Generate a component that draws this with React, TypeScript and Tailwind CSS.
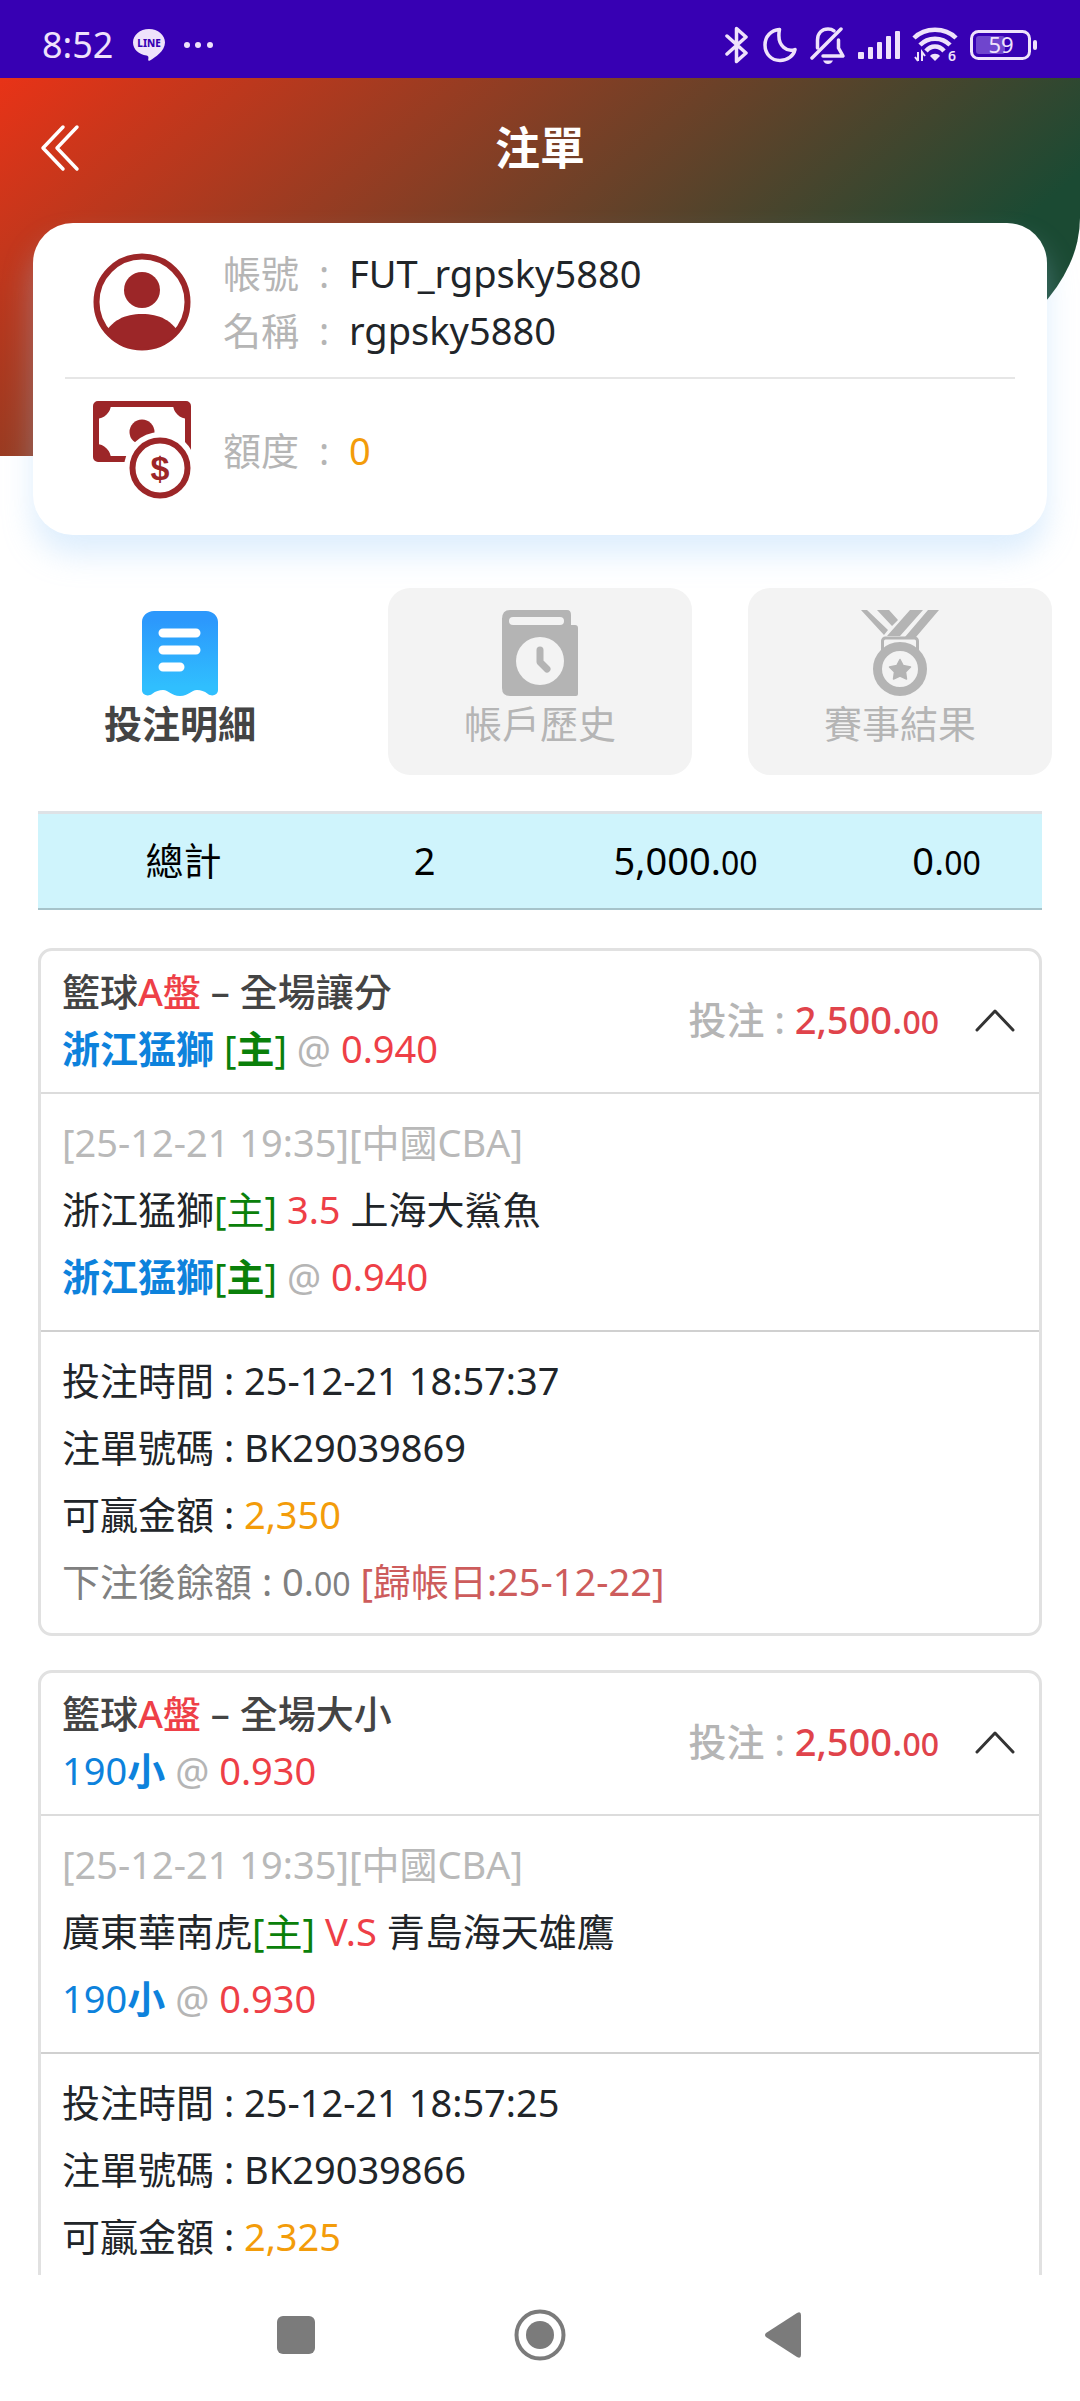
import { useState } from 'react';
import type { ReactNode } from 'react';

type Bet = {
  id: string;
  play: string;
  pick: ReactNode;
  pickDetail: ReactNode;
  odds: string;
  league: string;
  home: string;
  versus: string;
  away: string;
  time: string;
  win: string;
  settle?: string;
};

const bets: Bet[] = [
  {
    id: 'BK29039869',
    play: '全場讓分',
    pick: <><b>浙江猛獅</b> <HomeTag bold /></>,
    pickDetail: <><b>浙江猛獅</b><HomeTag bold /></>,
    odds: '0.940',
    league: '[25-12-21 19:35][中國CBA]',
    home: '浙江猛獅',
    versus: '3.5',
    away: '上海大鯊魚',
    time: '25-12-21 18:57:37',
    win: '2,350',
    settle: '25-12-22',
  },
  {
    id: 'BK29039866',
    play: '全場大小',
    pick: <>190<b>小</b></>,
    pickDetail: <>190<b>小</b></>,
    odds: '0.930',
    league: '[25-12-21 19:35][中國CBA]',
    home: '廣東華南虎',
    versus: 'V.S',
    away: '青島海天雄鷹',
    time: '25-12-21 18:57:25',
    win: '2,325',
  },
];

function HomeTag({ bold }: { bold?: boolean }) {
  return (
    <span className="text-[#0a800a]">
      [{bold ? <b>主</b> : '主'}]
    </span>
  );
}

// Integer part at full size, decimals smaller
const Amount = ({ value }: { value: string }) => {
  const [whole, cents] = value.split('.');
  return (
    <>
      {whole}.<span className="text-[32px]">{cents}</span>
    </>
  );
};

const StatusBar = () => (
  <div className="flex h-[78px] shrink-0 items-center bg-[#3700b3] px-[42px] pt-3 text-[#efe2fb]">
    <span className="text-4xl leading-none">8:52</span>
    <svg className="ml-5 h-8 w-8" viewBox="0 0 32 32" aria-label="LINE">
      <path d="M16 0C7 0 0 6 0 13.500C0 20.500 6 25.500 13.500 26.500C16 27 15.500 29 15.200 31C15.200 32 16 32 17 31.400C22 28.500 32 22 32 13.500C32 6 25 0 16 0Z" fill="currentColor" />
      <text x="16" y="18" textAnchor="middle" fontSize="10" fontWeight="800" fill="#3700b3">LINE</text>
    </svg>
    <svg className="ml-4 h-8 w-9" viewBox="0 0 36 32" fill="currentColor">
      <circle cx="6" cy="16" r="3" />
      <circle cx="17" cy="16" r="3" />
      <circle cx="29" cy="16" r="3" />
    </svg>

    <div className="ml-auto flex items-center">
      <svg className="h-[38px] w-6" viewBox="0 0 24 38" fill="none" stroke="currentColor" strokeWidth="3.500" strokeLinejoin="round" strokeLinecap="round">
        <path d="M2 10L21 27L11.500 35.500V2.500L21 11L2 28" />
      </svg>
      <svg className="ml-[14px] h-9 w-[34px]" viewBox="0 0 34 36" fill="none" stroke="currentColor" strokeWidth="3.500" strokeLinejoin="round">
        <path d="M16.500 2.500C8 3 2 9.500 2 18C2 27 8.500 33.500 17 33.500C24.500 33.500 30.500 29 32 22.500C26 25 13 21 16.500 2.500Z" />
      </svg>
      <svg className="ml-[13px] h-[38px] w-9" viewBox="0 0 36 38" fill="none" stroke="currentColor" strokeWidth="3.500" strokeLinecap="round" strokeLinejoin="round">
        <path d="M2 32L31 3" />
        <path d="M7.500 22V14C7.500 7 12 3 18 3C20.500 3 22.500 3.600 24 4.800" />
        <path d="M28.500 14V22L33 30H13" />
        <path d="M13 34.500H23C22 37 20 38 18 38C16 38 14 37 13 34.500Z" fill="currentColor" stroke="none" />
      </svg>
      <svg className="ml-3 h-7 w-11" viewBox="0 0 44 28" fill="currentColor">
        <rect x="0" y="21" width="6" height="7" rx="1" />
        <rect x="10" y="16" width="5" height="12" rx="1" />
        <rect x="19" y="11" width="5" height="17" rx="1" />
        <rect x="28" y="5" width="5" height="23" rx="1" />
        <rect x="37" y="0" width="5" height="28" rx="1" />
      </svg>
      <svg className="ml-[10px] h-11 w-[46px]" viewBox="0 -4 46 44" fill="none" stroke="currentColor" strokeWidth="4.500">
        <path d="M2 11C13 0 33 0 44 11" />
        <path d="M8 18C16 9.500 30 9.500 38 18" />
        <path d="M14 24C19 18 27 18 32 24" />
        <path d="M18 29C20 26 26 26 28 29L23 34Z" fill="currentColor" stroke="none" />
        <path d="M6 25V34M3 30L6 34M10 34V25L13 29" strokeWidth="2" />
        <text x="36" y="34" fontSize="14" fontWeight="600" stroke="none" fill="currentColor">6</text>
      </svg>
      <svg className="ml-3 h-[30px] w-[68px]" viewBox="0 0 68 30">
        <rect x="1.500" y="1.500" width="58" height="27" rx="7" fill="none" stroke="currentColor" strokeWidth="3" />
        <rect x="6" y="6" width="29" height="18" rx="3" fill="#6f45cd" />
        <rect x="63" y="10" width="4" height="10" rx="2" fill="currentColor" />
        <text x="31" y="23" textAnchor="middle" fontSize="22" fill="currentColor">59</text>
      </svg>
    </div>
  </div>
);

const UserIcon = () => (
  <svg className="h-[98px] w-[98px]" viewBox="0 0 98 98">
    <clipPath id="face"><circle cx="49" cy="49" r="46" /></clipPath>
    <circle cx="49" cy="49" r="45.500" fill="none" stroke="#9c2628" strokeWidth="6" />
    <circle cx="49" cy="37" r="18" fill="#9c2628" />
    <path d="M10 84C18 67 32 61 49 61C66 61 80 67 88 84V98H10Z" fill="#9c2628" clipPath="url(#face)" />
  </svg>
);

const MoneyIcon = () => (
  <svg className="h-[98px] w-[98px]" viewBox="0 0 98 98">
    <rect x="3" y="3" width="92" height="55" rx="2" fill="none" stroke="#9c2628" strokeWidth="6" strokeLinejoin="round" />
    <path d="M3 3H18A15 15 0 0 1 3 18ZM95 3H80A15 15 0 0 0 95 18ZM3 58H18A15 15 0 0 0 3 43Z" fill="#9c2628" />
    <circle cx="49" cy="31" r="12.500" fill="#9c2628" />
    <circle cx="67" cy="67" r="36" fill="#fff" />
    <circle cx="67" cy="67" r="27.500" fill="#fff" stroke="#9c2628" strokeWidth="6" />
    <text x="67" y="79" textAnchor="middle" fontSize="34" fontWeight="700" fill="#9c2628" className="font-['Liberation_Sans',sans-serif]">$</text>
  </svg>
);

const ReceiptIcon = () => (
  <svg className="h-[86px] w-[78px]" viewBox="0 0 78 86">
    <defs>
      <linearGradient id="receipt" x1="0" y1="0" x2="0" y2="1">
        <stop offset="0.100" stopColor="#2c98fc" />
        <stop offset="0.900" stopColor="#30bffe" />
      </linearGradient>
    </defs>
    <path d="M13 1H65C72 1 77 6 77 12V80C77 85 71 87 67 84C63 81 60 80 56 80C50 80 48 86 39 86C30 86 28 80 22 80C18 80 15 81 11 84C7 87 1 85 1 80V12C1 6 6 1 13 1Z" fill="url(#receipt)" />
    <path d="M22 23H55M22 40H55M22 57H39" stroke="#fff" strokeWidth="9" strokeLinecap="round" />
  </svg>
);

const HistoryIcon = () => (
  <svg className="h-[86px] w-[78px]" viewBox="0 0 78 86">
    <path d="M9 0H66Q70 0 70 5V15H74Q77 15 77 18V84Q77 86 75 86H9Q1 86 1 78V9Q1 0 9 0Z" fill="#b4b4b4" />
    <rect x="8" y="7" width="55" height="8" rx="4" fill="#f3f3f3" />
    <circle cx="39" cy="51" r="24" fill="#f3f3f3" />
    <path d="M39 40V52L46 59" fill="none" stroke="#b4b4b4" strokeWidth="7" strokeLinecap="round" strokeLinejoin="round" />
  </svg>
);

const MedalIcon = () => (
  <svg className="h-[86px] w-[78px]" viewBox="0 0 78 86" fill="#b4b4b4">
    <path d="M0 0H6L27 20L23 25ZM16 0H28L37 10L31 16ZM49 0H62L39 26H26ZM67 0H78L55 27H44Z" />
    <rect x="21.500" y="28" width="35" height="16" rx="3" fill="none" stroke="#b4b4b4" strokeWidth="3" />
    <circle cx="39" cy="59" r="22.500" fill="#f3f3f3" stroke="#b4b4b4" strokeWidth="9" />
    <path d="M39 49.500L42.200 55.500L49.500 57L44.500 62L45.500 69L39 66L32.500 69L33.500 62L28.500 57L35.800 55.500Z" stroke="#b4b4b4" strokeWidth="1.500" strokeLinejoin="round" />
  </svg>
);

const tabs = [
  { label: '投注明細', icon: <ReceiptIcon /> },
  { label: '帳戶歷史', icon: <HistoryIcon /> },
  { label: '賽事結果', icon: <MedalIcon /> },
];

const ProfileRow = ({ label, children }: { label: string; children: ReactNode }) => (
  <div className="flex leading-[57px]">
    <dt className="flex text-[#b5b5b5]">
      {label}
      <span className="w-[50px] text-center">:</span>
    </dt>
    <dd>{children}</dd>
  </div>
);

const BetCard = ({ bet }: { bet: Bet }) => {
  const [open, setOpen] = useState(true);

  return (
    <article className="rounded-[14px] border-3 border-[#e1e1e1]">
      <header className="flex items-center justify-between pt-3 pr-6 pb-[15px] pl-[21px]">
        <div className="leading-[57px]">
          <h2 className="font-medium text-[#444]">
            籃球<span className="text-[#ee3f47]">A盤</span> – {bet.play}
          </h2>
          <p className="text-[#0d82dc]">
            {bet.pick} <span className="text-[#b5b5b5]">@</span>{' '}
            <span className="text-[#ee3f47]">{bet.odds}</span>
          </p>
        </div>
        <div className="flex items-center">
          <p className="font-medium text-[#b5b5b5]">
            投注 : <span className="text-[#e0434b]"><Amount value="2,500.00" /></span>
          </p>
          <button type="button" aria-label="展開" className="ml-9" onClick={() => setOpen(!open)}>
            <svg className="h-6 w-10" viewBox="0 0 40 24" fill="none" stroke="#333" strokeWidth="3" strokeLinecap="round" strokeLinejoin="round">
              <path d="M2 22L20 3L38 22" />
            </svg>
          </button>
        </div>
      </header>

      {open && (
        <>
          <div className="border-t-2 border-[#dcdcdc] px-[21px] pt-[15px] pb-5 leading-[67px]">
            <p className="text-[#b9b9b9]">{bet.league}</p>
            <p>
              {bet.home}<HomeTag /> <span className="text-[#ee3f47]">{bet.versus}</span> {bet.away}
            </p>
            <p className="text-[#0d82dc]">
              {bet.pickDetail} <span className="text-[#b5b5b5]">@</span>{' '}
              <span className="text-[#ee3f47]">{bet.odds}</span>
            </p>
          </div>
          <div className="border-t-2 border-[#d0d0d0] px-[21px] pt-[15px] pb-4 leading-[67px]">
            <p>投注時間 : {bet.time}</p>
            <p>注單號碼 : {bet.id}</p>
            <p>可贏金額 : <span className="text-[#f39c0a]">{bet.win}</span></p>
            {bet.settle && (
              <p className="text-[#808080]">
                下注後餘額 : <Amount value="0.00" />{' '}
                <span className="text-[#cd5c5c]">[歸帳日:{bet.settle}]</span>
              </p>
            )}
          </div>
        </>
      )}
    </article>
  );
};

export default function App() {
  const [active, setActive] = useState(0);

  return (
    <div className="flex h-screen flex-col bg-white font-['Noto_Sans','Noto_Sans_CJK_TC',sans-serif] text-[38px] text-[#212529]">
      <StatusBar />

      <main className="min-h-0 flex-1 overflow-y-auto [scrollbar-width:none]">
        {/* Title bar on the curved gradient */}
        <header className="h-[378px] rounded-br-[50%_63%] bg-[linear-gradient(140deg,#e83317_0%,#1b4a33_78%)]">
          <div className="grid h-[140px] grid-cols-3 items-center px-10">
            <button type="button" aria-label="返回" className="justify-self-start">
              <svg className="h-12 w-10" viewBox="0 0 40 48" fill="none" stroke="#fff" strokeWidth="3.500" strokeLinecap="round" strokeLinejoin="round">
                <path d="M23 3L3 24L23 45M37 3L17 24L37 45" />
              </svg>
            </button>
            <h1 className="text-center text-[45px] font-bold text-white">注單</h1>
          </div>
        </header>

        {/* Account card */}
        <section className="relative mx-[33px] -mt-[233px] rounded-[40px] bg-white px-8 pb-9 shadow-[0_20px_30px_rgba(160,205,250,0.35)]">
          <div className="flex items-center gap-8 border-b-2 border-[#e6e6e6] px-7 pt-[22px] pb-[18px]">
            <UserIcon />
            <dl>
              <ProfileRow label="帳號">FUT_rgpsky5880</ProfileRow>
              <ProfileRow label="名稱">rgpsky5880</ProfileRow>
            </dl>
          </div>
          <div className="flex items-center gap-8 px-7 pt-[22px]">
            <MoneyIcon />
            <dl>
              <ProfileRow label="額度">
                <span className="text-[#f39c0a]">0</span>
              </ProfileRow>
            </dl>
          </div>
        </section>

        <div className="mt-[53px] grid grid-cols-3 gap-14 px-7">
          {tabs.map((tab, i) => (
            <button
              key={tab.label}
              type="button"
              onClick={() => setActive(i)}
              className={
                i === active
                  ? 'flex h-[187px] flex-col items-center rounded-[22px] pt-[22px] font-bold text-[#444]'
                  : 'flex h-[187px] flex-col items-center rounded-[22px] bg-[#f3f3f3] pt-[22px] text-[#b5b5b5]'
              }
            >
              {tab.icon}
              <span className="leading-[54px]">{tab.label}</span>
            </button>
          ))}
        </div>

        <div className="px-[38px] pt-9">
          <table className="w-full table-fixed border-t-3 border-b-2 border-t-[#dee2e6] border-b-[#a6c3ca] bg-[#cff4fc] text-center text-black">
            <colgroup>
              <col className="w-[29%]" />
              <col className="w-[19%]" />
              <col className="w-[33%]" />
              <col className="w-[19%]" />
            </colgroup>
            <tbody>
              <tr className="h-24">
                <td>總計</td>
                <td>2</td>
                <td><Amount value="5,000.00" /></td>
                <td><Amount value="0.00" /></td>
              </tr>
            </tbody>
          </table>

          <div className="flex flex-col gap-[34px] pt-[38px] pb-9">
            {bets.map((bet) => (
              <BetCard key={bet.id} bet={bet} />
            ))}
          </div>
        </div>
      </main>

      {/* System navigation */}
      <nav className="flex h-[126px] shrink-0 items-center justify-center gap-[198px] bg-white pb-[6px] text-[#7b7b7b]">
        <button type="button" aria-label="最近">
          <svg className="h-10 w-10" viewBox="0 0 40 40" fill="currentColor">
            <rect x="1" y="1" width="38" height="38" rx="6" />
          </svg>
        </button>
        <button type="button" aria-label="主畫面">
          <svg className="h-[52px] w-[52px]" viewBox="0 0 52 52">
            <circle cx="26" cy="26" r="23.500" fill="none" stroke="currentColor" strokeWidth="4" />
            <circle cx="26" cy="26" r="14" fill="currentColor" />
          </svg>
        </button>
        <button type="button" aria-label="上一頁">
          <svg className="h-12 w-10" viewBox="0 0 40 48" fill="currentColor">
            <path d="M2 22L33 2Q37 0 37 4V44Q37 48 33 46L2 26Q0 24 2 22Z" />
          </svg>
        </button>
      </nav>
    </div>
  );
}
